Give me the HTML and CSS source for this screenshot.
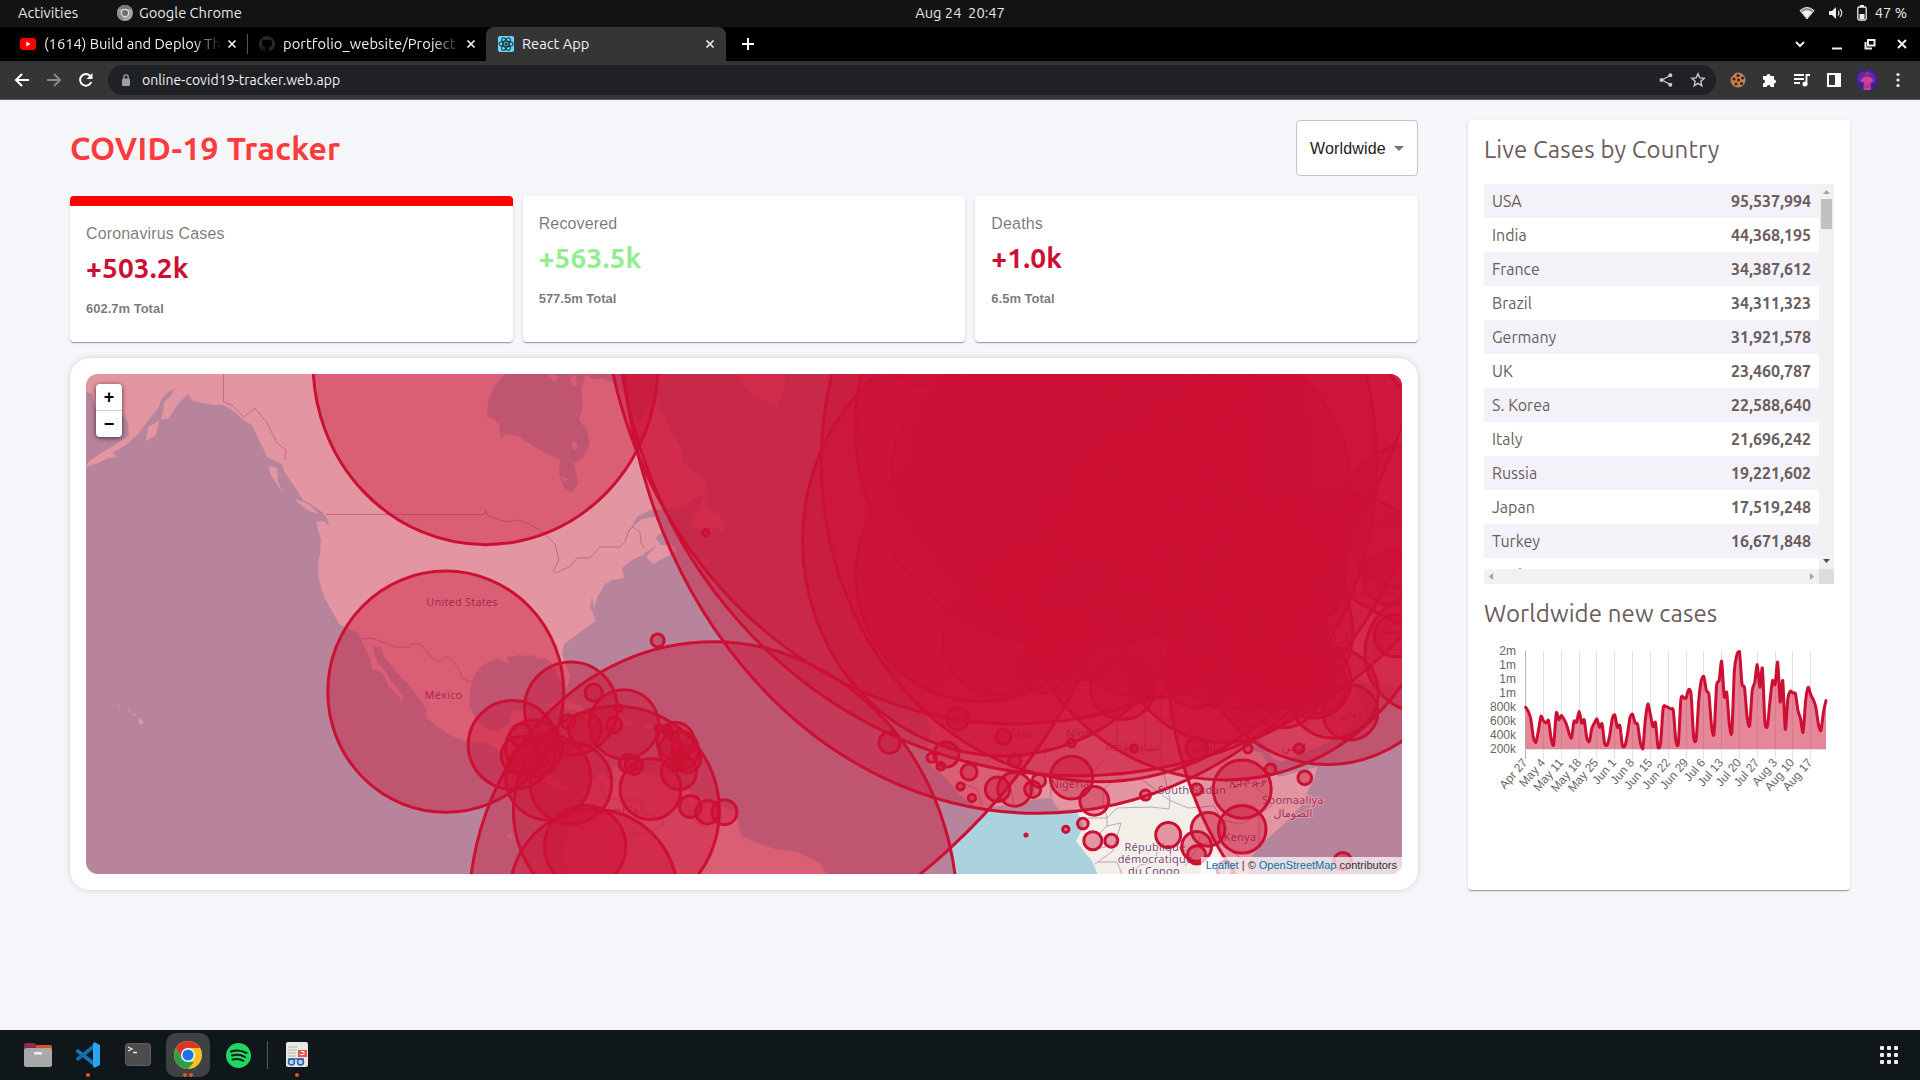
FILE: index.html
```html
<!DOCTYPE html>
<html lang="en">
<head>
<meta charset="utf-8">
<title>React App</title>
<link rel="stylesheet" href="styles.css">
</head>
<body>
<header class="topbar">
  <div class="topbar-left">
    <span class="activities">Activities</span>
    <svg width="16" height="16" viewBox="0 0 16 16"><circle cx="8" cy="8" r="8" fill="#a5a5a5"/><path d="M1 4a8 8 0 0 1 14 0H8z" fill="#777"/><path d="M1 4l4 6 2 6A8 8 0 0 1 1 4z" fill="#8c8c8c"/><circle cx="8" cy="8" r="4.2" fill="#ddd"/><circle cx="8" cy="8" r="3" fill="#6e6e6e"/></svg>
    <span class="appname">Google Chrome</span>
  </div>
  <span class="clock">Aug 24&nbsp; 20:47</span>
  <div class="topbar-right">
    <svg width="16" height="14" viewBox="0 0 16 14"><path d="M8 13L1 4.500Q8-1.500 15 4.500z" fill="#8b8b8b" stroke="#eee"/><path d="M8 12L3 6Q8 2.500 13 6z" fill="#f2f2f2"/></svg>
    <svg width="16" height="14" viewBox="0 0 16 14"><path d="M1 5h3l4-4v12L4 9H1z" fill="#eee"/><path d="M10 4.500q2 2.500 0 5M12 3q3.500 4 0 8" fill="none" stroke="#ddd" stroke-width="1.200"/></svg>
    <svg width="10" height="16" viewBox="0 0 10 16"><path d="M3 0h4v2H3z" fill="#eee"/><rect x=".8" y="2" width="8.400" height="13" rx="1.500" fill="none" stroke="#eee" stroke-width="1.300"/><path d="M2.500 9h5v5h-5z" fill="#eee"/></svg>
    <span class="battery">47 %</span>
  </div>
</header>

<nav class="tabs">
  <div class="tab tab-one">
    <svg width="16" height="16" viewBox="0 0 16 16"><rect y="2" width="16" height="12" rx="3" fill="#f00"/><path d="M6.300 5.500v5L10.500 8z" fill="#fff"/></svg>
    <span class="tab-title fade">(1614) Build and Deploy Th</span>
    <svg class="tab-x" width="10" height="10" viewBox="0 0 10 10"><path d="M1.500 1.500l7 7m0-7l-7 7"/></svg>
  </div>
  <div class="tab tab-two">
    <svg width="16" height="16" viewBox="0 0 16 16"><path d="M8 0a8 8 0 0 0-2.500 15.600c.4.100.5-.2.500-.4v-1.500c-2.200.5-2.700-1-2.700-1-.4-.9-.9-1.200-.9-1.200-.7-.5.1-.5.1-.5.800.1 1.200.8 1.200.8.700 1.300 1.900.9 2.300.7.100-.5.300-.9.500-1.100-1.800-.2-3.600-.9-3.600-4 0-.9.300-1.600.8-2.100-.1-.2-.4-1 .1-2.100 0 0 .7-.2 2.200.8a7.600 7.600 0 0 1 4 0c1.500-1 2.200-.8 2.200-.8.400 1.100.2 1.900.1 2.100.500.5.8 1.200.8 2.100 0 3.100-1.900 3.700-3.600 3.900.3.300.5.800.5 1.500v2.400c0 .2.100.5.5.4A8 8 0 0 0 8 0z" fill="#24292e"/></svg>
    <span class="tab-title fade">portfolio_website/Project</span>
    <svg class="tab-x" width="10" height="10" viewBox="0 0 10 10"><path d="M1.500 1.500l7 7m0-7l-7 7"/></svg>
  </div>
  <div class="tab tab-active">
    <svg width="16" height="16" viewBox="0 0 16 16"><rect width="16" height="16" rx="2" fill="#61dafb"/><g fill="none" stroke="#20353d" stroke-width="1.100"><ellipse cx="8" cy="8" rx="7" ry="2.700"/><ellipse cx="8" cy="8" rx="7" ry="2.700" transform="rotate(60 8 8)"/><ellipse cx="8" cy="8" rx="7" ry="2.700" transform="rotate(120 8 8)"/></g><circle cx="8" cy="8" r="1.500" fill="#20353d"/></svg>
    <span class="tab-title">React App</span>
    <svg class="tab-x" width="10" height="10" viewBox="0 0 10 10"><path d="M1.500 1.500l7 7m0-7l-7 7"/></svg>
  </div>
  <svg class="newtab" width="14" height="14" viewBox="0 0 14 14"><path d="M7 1v12M1 7h12" stroke="#fff" stroke-width="2"/></svg>
  <div class="window-controls">
    <svg width="12" height="12" viewBox="0 0 12 12"><path d="M2 4l4 4 4-4"/></svg>
    <svg width="12" height="12" viewBox="0 0 12 12"><path d="M1 10.500h10"/></svg>
    <svg width="12" height="12" viewBox="0 0 12 12"><path d="M4 2h6.500v5.500H4zM1.500 4v6.500H8"/></svg>
    <svg width="12" height="12" viewBox="0 0 12 12"><path d="M2 2l8 8m0-8l-8 8"/></svg>
  </div>
</nav>

<div class="toolbar">
  <svg width="16" height="16" viewBox="0 0 16 16" class="nav-icon"><path d="M15 8H2.500M8 2L2 8l6 6"/></svg>
  <svg width="16" height="16" viewBox="0 0 16 16" class="nav-icon dim"><path d="M1 8h12.500M8 2l6 6-6 6"/></svg>
  <svg width="16" height="16" viewBox="0 0 16 16" class="nav-icon"><path d="M13.300 10A5.800 5.800 0 1 1 12.500 4.300"/><path d="M14.500 1v6h-6z" fill="#fff" stroke="none"/></svg>
  <div class="omnibox">
    <svg width="10" height="13" viewBox="0 0 10 13"><rect x="1" y="4.500" width="8" height="7.500" rx="1" fill="#9aa0a6"/><path d="M2.800 5V3a2.200 2.200 0 0 1 4.400 0v2" fill="none" stroke="#9aa0a6" stroke-width="1.300"/></svg>
    <span class="url">online-covid19-tracker.web.app</span>
    <svg width="14" height="14" viewBox="0 0 14 14"><path d="M11 2.500L3 7l8 4.500" fill="none" stroke="#c5c7ca" stroke-width="1.300"/><g fill="#c5c7ca"><circle cx="11.300" cy="2.300" r="2"/><circle cx="2.500" cy="7" r="2"/><circle cx="11.300" cy="11.700" r="2"/></g></svg>
    <svg width="16" height="16" viewBox="0 0 16 16"><path d="M8 1.800l1.800 4.100 4.400.4-3.300 3 .9 4.400L8 11.400l-3.800 2.300.9-4.400-3.300-3 4.400-.4z" fill="none" stroke="#c5c7ca" stroke-width="1.400"/></svg>
  </div>
  <div class="extensions">
    <svg width="16" height="16" viewBox="0 0 16 16"><circle cx="8" cy="8" r="7.500" fill="#c77e53"/><path d="M0 0h6L2 5H0z" fill="#353535"/><g fill="#3b2316"><circle cx="8" cy="3.500" r="1.600"/><circle cx="4" cy="7" r="1.600"/><circle cx="8.500" cy="8" r="1.500"/><circle cx="12.500" cy="6" r="1.500"/><circle cx="6" cy="12" r="1.500"/><circle cx="11.500" cy="11.500" r="1.600"/></g></svg>
    <svg width="16" height="16" viewBox="0 0 16 16"><path d="M1 4h3.500a2 2 0 1 1 4 0H12v3.500a2 2 0 1 1 0 4V15H8.700a2 2 0 0 0-4 0H1v-3.500a2 2 0 0 0 0-4z" fill="#fff"/></svg>
    <svg width="16" height="16" viewBox="0 0 16 16"><path d="M0 3h10M0 7h10M0 11h6M12.500 12V3H16" fill="none" stroke="#fff" stroke-width="1.800"/><circle cx="11" cy="12" r="2.500" fill="#fff"/></svg>
    <svg width="16" height="16" viewBox="0 0 16 16"><path d="M1 1h14v14H1zM3 3v10h6V3z" fill="#fff" fill-rule="evenodd"/></svg>
    <svg width="22" height="22" viewBox="0 0 22 22"><circle cx="11" cy="11" r="11" fill="#39258c"/><path d="M3 5l4-3 2 3 4-3 5 4 2 6-3 3V9l-6-2-6 2-1 5-3-4z" fill="#5b2bab"/><path d="M4.500 12l1.500-3 3-1.500h4L16 9l1.500 3-2 2-1-1 .5 7.500a11 11 0 0 1-7.500 0L8 13l-1.500 1z" fill="#cf4096"/><circle cx="11" cy="5" r="2.600" fill="#8a3080"/><path d="M8.500 15h5l.5 4H8z" fill="#a93aa0"/></svg>
    <svg width="6" height="16" viewBox="0 0 6 16"><g fill="#eee"><circle cx="3" cy="2.500" r="1.600"/><circle cx="3" cy="8" r="1.600"/><circle cx="3" cy="13.500" r="1.600"/></g></svg>
  </div>
</div>

<main class="app">
  <section class="app-left">
    <div class="app-header">
      <h1>COVID-19 Tracker</h1>
      <div class="select">Worldwide <svg width="10" height="5" viewBox="0 0 10 5"><path d="M0 0h10L5 5z" fill="#757575"/></svg></div>
    </div>
    <div class="stats">
      <article class="card stat selected"><p>Coronavirus Cases</p><h2>+503.2k</h2><small>602.7m Total</small></article>
      <article class="card stat"><p>Recovered</p><h2 class="green">+563.5k</h2><small>577.5m Total</small></article>
      <article class="card stat"><p>Deaths</p><h2>+1.0k</h2><small>6.5m Total</small></article>
    </div>
    <div class="map-card">
      <div class="map">
        <svg id="map" width="1316" height="500" viewBox="86 374 1316 500">
          <rect x="86" y="374" width="1316" height="500" fill="#aad3df"/>
          <g fill="#f2efe9">
            <path d="M86 374V391L92 394 95 408 102 414 118 411 128 421 129 435 118 443 103 452 88 462 86 467 98 463 108 458 118 457 112 453 126 445 139 433 150 418 158 409 162 398 168 392 175 389 170 397 164 402 163 412 161 420 169 418 177 405 182 400 188 394 193 401 202 403 215 405 223 405 232 410 236 413 245 421 252 425 256 434 262 446 267 457 282 464 284 471 290 480 297 490 303 500 312 505 322 512 327 518 329 526 324 521 316 522 321 540 320 553 318 565 319 580 324 597 333 613 340 625 347 628 358 633 361 639 366 650 371 660 372 669 379 671 385 677 389 687 395 692 402 701 403 696 397 688 391 681 387 673 378 664 374 653 373 646 381 647 385 658 393 668 406 682 417 695 427 710 426 717 438 727 450 735 469 743 484 742 495 748 505 754 519 757 528 763 536 769 543 780 553 787 567 792 576 783 584 795 584 818 570 829 564 846 563 863 571 875H827L820 863 798 852 775 849 752 841 741 835 735 812 724 807 718 803 712 801 695 796 684 786 673 774 656 775 640 771 633 769 620 772 616 766 611 772 616 781 607 779 605 772 599 772 587 789 576 782 567 786 559 783 549 772 552 749 536 743 522 744 525 729 530 710 513 711 508 725 499 731 488 730 477 722 469 705 470 692 472 682 477 670 485 664 497 658 502 661 510 664 506 657 520 655 525 656 533 655 538 659 544 657 553 664 560 682 567 688 570 676 562 654 564 644 580 632 596 621 590 606 592 596 594 608 597 598 605 584 612 580 624 578 622 568 632 560 641 556 651 549 657 545 652 551 646 557 653 564 668 556 677 550 674 546 661 545 655 538 662 532 655 517 642 519 632 527 626 536 637 517 650 510 684 508 693 499 708 493 703 478 695 472 684 464 680 447 672 432 665 418 658 406 652 400 638 426 635 413 627 398 618 386 604 379 592 379 585 374V378L581 390 583 405 579 420 587 430 590 443 583 458 574 463 578 484 572 493 564 488 559 473 560 460 549 455 533 446 519 436 508 434 501 438 499 425 494 419 487 417 488 400 496 384 505 374Z"/>
            <path d="M690 527L697 510 704 494 708 500 707 509 719 514 725 525 722 534 716 527 707 528ZM740 374L745 388 754 396 766 401 777 408 783 392 786 374Z"/>
            <path d="M548 374l10 2-4 6ZM570 378l6-3 1 10-4 2ZM573 441l5 4-2 5-5-3ZM561 476l7 3-4 3ZM269 466l8 2 1 14 5 10-8-10-5-9ZM296 499l14 6 8 9-9-3-12-9ZM148 427l11-6-3 14-10 6Z"/>
            <path d="M140 717l4 5-4 3-2-4ZM127 709l4 1-1 2ZM132 713l5 2-3 1ZM117 705l3 1v2ZM545 706L560 699 579 705 602 720 588 720 577 710ZM604 719L614 712 634 723 622 727 603 726ZM581 725l12 3-8 2ZM642 724h10v4h-9ZM506 836l6-3-1 7Z"/>
            <path d="M991 616L983 632 970 652 951 672 928 713 931 743 926 750 931 766 948 780 960 795 982 810 1002 805 1014 808 1034 799 1051 798 1059 810 1074 809 1081 818 1083 828 1076 841 1092 861 1098 875H1249V861L1261 844 1284 824 1301 806 1315 776 1317 767 1279 777 1271 768 1262 754 1250 748 1242 729 1237 719 1219 672 1210 656 1190 649 1150 637 1133 654 1099 637 1085 605 1042 608 1008 621Z"/>
            <path d="M982 610L988 560 1040 540 1045 500 1100 450 1200 374H1402V687L1375 686 1349 676 1333 671 1320 672 1298 656 1310 674 1325 690 1346 680 1366 704 1355 721 1341 736 1321 746 1281 762 1273 759 1247 713 1225 671 1225 625 1150 600 1110 560 1060 550 1035 600Z"/>
          </g>
          <g class="borders">
            <path d="M223.500 374V402L232 405 244 417 255 408 267 423 277 443 286 450 285 460M326 514.500H484L485.500 510 488 516 507 522 516 520 525 522 540 530 555 544 559 560 553 571 556 573 571 566 577 558 590 558 600 547 620 547 625 542 629 530 633 527 640 532 641 543 645 548M361 639L372 638 395 647 410 647V644H420L434 660 440 662 444 657 450 658 458 668 463 679 473 682"/>
            <path d="M600 782L606 798 619 800 641 800 642 812 660 818 664 824 650 832 625 836M575 825L598 838 604 844 597 856 583 862 572 856M687 798L690 817 705 828 720 813"/>
            <path d="M1088 818H1107V826L1121 823M1107 826L1098 835 1106 847 1093 849M1107 818C1104 806 1097 790 1112 782L1140 778 1169 800 1188 808 1214 806M1107 818L1117 808 1151 807 1169 809 1170 800M1121 823L1113 851 1095 864M1098 862H1117L1122 874M1131 874L1140 865 1154 862 1158 850M1214 806L1222 820 1240 824 1259 815 1276 802 1259 790 1249 780M1259 815V844M1200 837L1195 851 1185 866M1185 851L1215 840 1245 861M1051 798V784L1063 775 1090 776 1104 760M1034 799V780M1014 807L1010 782M982 810L978 790 960 782M1010 782L1020 770 1045 776M992 646V740M1117 650V740L1145 755V690M1161 650V720H1237M1161 720V760L1170 800M1045 735L1117 690M1045 735V760M992 740L955 733M1325 690V705L1305 725M1374 600V670M1374 650H1402"/>
          </g>
          <g class="labels">
            <text x="462" y="606">United States</text><text x="443.500" y="699">México</text><text x="613" y="815">Colombia</text>
            <text x="957" y="724">موريتانيا</text><text x="1022" y="737">Mali</text><text x="1081" y="737">Niger</text><text x="1132" y="751">Tchad تشاد</text><text x="1197" y="751">السودان</text><text x="1294" y="751">اليمن</text><text x="1352" y="718">عمان</text><text x="1070" y="788">Nigeria</text><text x="1192" y="794">South Sudan</text><text x="1248" y="787">ኢትዮጵያ</text><text x="1293" y="804">Soomaaliya</text><text x="1293" y="817">الصومال</text><text x="1240" y="841">Kenya</text><text x="1155" y="851">République</text><text x="1155" y="863">démocratique</text><text x="1154" y="875">du Congo</text><text x="1398" y="523">Қазақстан</text><text x="1373" y="598">Turkmenistan</text><text x="1337" y="643">ایران</text><text x="1397" y="634">افغانستان</text>
          </g>
          <g id="circles"></g>
        </svg>
        <div class="zoom"><span>+</span><span>−</span></div>
        <div class="attribution"><a>Leaflet</a> | © <a>OpenStreetMap</a> contributors</div>
      </div>
    </div>
  </section>

  <aside class="card side">
    <h3>Live Cases by Country</h3>
    <div class="table-box">
      <div class="table">
        <div class="row"><span>USA</span><b>95,537,994</b></div>
        <div class="row"><span>India</span><b>44,368,195</b></div>
        <div class="row"><span>France</span><b>34,387,612</b></div>
        <div class="row"><span>Brazil</span><b>34,311,323</b></div>
        <div class="row"><span>Germany</span><b>31,921,578</b></div>
        <div class="row"><span>UK</span><b>23,460,787</b></div>
        <div class="row"><span>S. Korea</span><b>22,588,640</b></div>
        <div class="row"><span>Italy</span><b>21,696,242</b></div>
        <div class="row"><span>Russia</span><b>19,221,602</b></div>
        <div class="row"><span>Japan</span><b>17,519,248</b></div>
        <div class="row"><span>Turkey</span><b>16,671,848</b></div>
        <div class="row"><span>Spain</span><b></b></div>
      </div>
      <div class="vbar"><svg width="15" height="385" viewBox="0 0 15 385"><path d="M4 10h7L7.500 6z" fill="#a3a3a3"/><rect x="2" y="15" width="11" height="30" fill="#c1c1c1"/><path d="M4 375h7l-3.500 4z" fill="#505050"/></svg></div>
      <div class="hbar"><svg width="335" height="15" viewBox="0 0 335 15"><path d="M9 4v7L5 7.500zM326 4v7l4-3.500z" fill="#a3a3a3"/></svg></div>
      <div class="corner"></div>
    </div>
    <h3 class="chart-title">Worldwide new cases</h3>
    <svg id="chart" width="350" height="175" viewBox="1484 640 350 175">
      <g id="grid"></g><path id="area"/><path id="line"/><g id="ticks"></g>
    </svg>
  </aside>
</main>

<footer class="dock">
  <div class="dock-item"><svg width="28" height="26" viewBox="0 0 28 26"><path d="M0 3q0-2 2-2h8l3 2h13q2 0 2 3v6H0z" fill="#8d2a4c"/><path d="M12 3h14q2 0 2 3v6H12z" fill="#d8502a"/><rect y="6" width="28" height="19" rx="2.500" fill="#a9a9a9"/><rect x="10" y="10" width="8" height="2.500" rx="1" fill="#f3f3f3"/></svg></div>
  <div class="dock-item"><svg width="26" height="26" viewBox="0 0 26 26"><path d="M1 8.500L3 7l17 13v5L1 10z" fill="#1278bd"/><path d="M1 17.500L3 19 20 6V1L1 16z" fill="#0f6cb0"/><path d="M19 0l6 3v20l-6 3-1-2V2z" fill="#2ba6ee"/></svg><div class="dots"><i></i></div></div>
  <div class="dock-item"><svg width="26" height="24" viewBox="0 0 26 24"><rect x=".5" y=".5" width="25" height="22" rx="3" fill="#4c4c4c" stroke="#606060"/><path d="M3 4l4 2-4 2M8 9.500h4" fill="none" stroke="#e8e8e8" stroke-width="1.300"/></svg></div>
  <div class="dock-item current"><svg width="28" height="28" viewBox="0 0 28 28"><circle cx="14" cy="14" r="14" fill="#fcc31e"/><path d="M1.900 7a14 14 0 0 1 24.200 0H14l-6 10.500z" fill="#df3426"/><path d="M1.900 7L8 17.500l6 3.500h6l-6 7A14 14 0 0 1 1.900 7z" fill="#2e9e49"/><circle cx="14" cy="14" r="7" fill="#fff"/><circle cx="14" cy="14" r="5.600" fill="#1a73e8"/></svg><div class="dots"><i></i><i></i></div></div>
  <div class="dock-item"><svg width="25" height="25" viewBox="0 0 25 25"><circle cx="12.500" cy="12.500" r="12.500" fill="#1fd660"/><path d="M5 8.500q8-2.500 15.500 1.500M6 12.500q7-2 13 1.500M6.500 16.500q6-1.500 11 1.300" fill="none" stroke="#10191a" stroke-width="2" stroke-linecap="round"/></svg></div>
  <div class="divider"></div>
  <div class="dock-item last"><svg width="22" height="26" viewBox="0 0 22 26"><rect width="22" height="25" rx="2" fill="#e7e7e3"/><path d="M2 5h9M2 8h9M2 11h8M2 14h8" stroke="#b4b4b0"/><rect x="12" y="8" width="9" height="7" fill="#ef5350"/><path d="M14 12.500h4v-3h-3" fill="none" stroke="#fff"/><g fill="#b7d0e6" stroke="#2962a8" stroke-width="1.500"><circle cx="5.500" cy="20" r="3"/><circle cx="14.500" cy="20" r="3"/></g><path d="M2 17h16" stroke="#2962a8" stroke-width="1.500"/></svg><div class="dots"><i></i></div></div>
  <svg class="grid-icon" width="18" height="18" viewBox="0 0 18 18"><g fill="#eee"><rect width="4" height="4" rx="1"/><rect x="7" width="4" height="4" rx="1"/><rect x="14" width="4" height="4" rx="1"/><rect y="7" width="4" height="4" rx="1"/><rect x="7" y="7" width="4" height="4" rx="1"/><rect x="14" y="7" width="4" height="4" rx="1"/><rect y="14" width="4" height="4" rx="1"/><rect x="7" y="14" width="4" height="4" rx="1"/><rect x="14" y="14" width="4" height="4" rx="1"/></g></svg>
</footer>
<script src="app.js"></script>
</body>
</html>
```
FILE: styles.css
```css
* { box-sizing: border-box; }
body { margin: 0; width: 1920px; height: 1080px; overflow: hidden; display: flex; flex-direction: column; background: #f5f6fa; font-family: Ubuntu, "Noto Sans", sans-serif; }
svg { display: block; flex: none; }
h1, h2, h3, p { margin: 0; }

.topbar { height: 27px; flex: none; background: #131313; color: #e6e6e6; display: grid; grid-template-columns: 1fr auto 1fr; align-items: center; font-size: 14.67px; line-height: 24px; padding-bottom: 1px; }
.topbar-left { display: flex; align-items: center; padding-left: 18px; }
.activities { width: 99px; }
.appname { margin-left: 6px; }
.topbar-right { display: flex; align-items: center; justify-content: flex-end; gap: 13px; padding-right: 13px; }
.battery { margin-left: -5px; }

.tabs { height: 34px; flex: none; background: #000; display: flex; align-items: center; }
.tab { height: 34px; display: flex; align-items: center; color: #f1f1f1; font-size: 14.67px; }
.tab-title { flex: 1; margin: 0 5px 0 8px; padding-bottom: 2px; white-space: nowrap; overflow: hidden; }
.fade { -webkit-mask-image: linear-gradient(90deg, #000 84%, transparent 100%); mask-image: linear-gradient(90deg, #000 84%, transparent 100%); }
.tab-x path { stroke: #eee; stroke-width: 1.7; }
.tab-one { width: 248px; padding: 0 11px 0 20px; background: linear-gradient(#555, #555) right center / 1px 20px no-repeat; }
.tab-two { width: 238px; padding: 0 10px 0 11px; letter-spacing: .1px; }
.tab-active { width: 240px; padding: 0 11px 0 12px; background: #353535; border-radius: 8px 8px 0 0; }
.newtab { margin-left: 15px; }
.window-controls { margin-left: auto; display: flex; gap: 20.500px; padding-right: 12px; }
.window-controls svg:first-child { margin-right: 5px; }
.window-controls path { fill: none; stroke: #eee; stroke-width: 2; }

.toolbar { height: 39px; flex: none; background: #353535; border-bottom: 1px solid #625e5e; display: flex; align-items: center; padding: 0 19px 0 14px; }
.nav-icon { margin-right: 16px; fill: none; stroke: #fff; stroke-width: 2; }
.dim { stroke: #8a8a8a; }
.omnibox { margin-left: -2px; width: 1608px; height: 30px; border-radius: 15px; background: #202124; display: flex; align-items: center; padding: 0 10px 0 13px; gap: 17px; }
.url { flex: 1; margin-left: -6px; color: #f1f1f1; font-size: 14px; letter-spacing: .05px; }
.extensions { margin-left: auto; display: flex; align-items: center; gap: 16px; }
.extensions svg:nth-child(5) { margin: 0 1px 0 -2px; }

.app { flex: 1; display: flex; padding: 20px 70px 0; gap: 50px; }
.app-left { width: 1348px; }
.app-header { height: 56px; display: flex; justify-content: space-between; align-items: center; }
h1 { color: #fc3c3c; font-size: 32px; font-weight: 700; letter-spacing: .28px; }
.select { width: 122px; height: 56px; border: 1px solid #c4c4c4; border-radius: 4px; background: #fff; display: flex; align-items: center; gap: 8px; padding: 1px 0 0 13px; font: 16px "Liberation Sans", sans-serif; letter-spacing: .15px; color: #212121; }
.card { background: #fff; border-radius: 4px; box-shadow: 0 2px 1px -1px rgba(0,0,0,.2), 0 1px 1px rgba(0,0,0,.14), 0 1px 3px rgba(0,0,0,.12); }
.stats { display: grid; grid-template-columns: repeat(3, 1fr); gap: 10px; margin-top: 20px; }
.stat { height: 146px; padding: 16px; color: rgba(0,0,0,.54); font-family: "Liberation Sans", sans-serif; }
.selected { border-top: 10px solid red; }
.stat p { font-size: 16px; line-height: 24px; letter-spacing: .15px; }
.stat h2 { margin: 3px 0 13px; font: 700 28px/38px Ubuntu, "Noto Sans", sans-serif; letter-spacing: .15px; color: #cc1034; }
.stat h2.green { color: lightgreen; }
.stat small { display: block; font-size: 13px; font-weight: 700; line-height: 18px; }

.map-card { margin-top: 16px; height: 532px; padding: 16px; border-radius: 20px; background: #fff; box-shadow: 0 0 8px -4px rgba(0,0,0,.5); }
.map { position: relative; width: 1316px; height: 500px; border-radius: 12px; overflow: hidden; }
.borders { fill: none; stroke: #b795b8; stroke-width: 1; stroke-opacity: .85; }
.labels { font: 11px "Noto Sans", "DejaVu Sans", sans-serif; fill: #7b4c7a; text-anchor: middle; stroke: #f8f3f1; stroke-width: 2px; paint-order: stroke; letter-spacing: .2px; }
#circles ellipse { fill: #cc1034; fill-opacity: .4; stroke: #cc1034; stroke-width: 3; }
.zoom { position: absolute; left: 10px; top: 10px; width: 26px; border-radius: 4px; background: #fff; box-shadow: 0 1px 5px rgba(0,0,0,.65); font: 700 18px/26px "Liberation Sans", sans-serif; text-align: center; }
.zoom span { display: block; height: 26px; }
.zoom span:first-child { height: 27px; border-bottom: 1px solid #ccc; }
.attribution { position: absolute; right: 0; bottom: 0; height: 17px; padding: 0 5px; background: rgba(255,255,255,.7); color: #333; font: 11px/17px "Liberation Sans", sans-serif; }
.attribution a { color: #0078a8; }

.side { width: 382px; height: 770px; padding: 16px; color: #6a5d5d; }
h3 { font-size: 24px; line-height: 28px; font-weight: 400; letter-spacing: .12px; }
.table-box { margin-top: 20px; width: 350px; height: 400px; display: grid; grid-template: 385px 15px / 335px 15px; }
.table { overflow: hidden; font-size: 16px; }
.row { height: 34px; padding: 0 8px; display: flex; align-items: center; justify-content: space-between; }
.row:nth-child(odd) { background: #f3f2f8; }
.vbar, .hbar { background: #f1f1f1; }
.corner { background: #dcdcdc; }
.chart-title { margin: 16px 0 12px; }
#area { fill: #cc1034; fill-opacity: .5; }
#line { fill: none; stroke: #cc1034; stroke-width: 3; stroke-linejoin: round; stroke-linecap: round; }
#grid { stroke: #e2e2e2; stroke-width: 1; }
#ticks { font: 12px "Liberation Sans", sans-serif; fill: #666; text-anchor: end; }

.dock { height: 50px; flex: none; background: #10171a; display: flex; align-items: center; padding: 0 22px 0 16px; }
.dock-item { position: relative; width: 44px; height: 44px; margin-right: 6px; border-radius: 10px; display: grid; place-items: center; }
.current { background: #3e4244; }
.last { margin: 0; }
.divider { width: 1px; height: 28px; margin: 0 7px 0 1px; background: #555b5e; }
.dots { position: absolute; left: 0; right: 0; bottom: 0; display: flex; justify-content: center; gap: 2px; }
.dots i { width: 4px; height: 4px; border-radius: 50%; background: #e95420; }
.grid-icon { margin-left: auto; }
```
FILE: app.js
```js
const NS = 'http://www.w3.org/2000/svg';
function add(parent, name, attrs, text) {
  const el = document.createElementNS(NS, name);
  for (const k in attrs) el.setAttribute(k, attrs[k]);
  if (text) el.textContent = text;
  document.getElementById(parent).appendChild(el);
}

// latitude, longitude, cases in thousands
const countries = `38,-97,95538 20,77,44368 46,2,34388 -10,-55,34311 51,9,31922 54,-2,23461 37,127.5,22589 42.83,12.83,21696
60,100,19222 36,138,17519 39,35,16672 40,-4,13319 16,106,11380 -27,133,9950 -34,-64,9659 52.5,5.75,8385 32,53,7505 23,-102,6988
4,-72,6299 -5,120,6335 52,20,6170 39.5,-8,5399 23.5,121,5150 49,32,5039 47.33,13.33,4840 2.5,112.5,4760 15,100,4640 31.5,34.75,4610
50.83,4,4450 40,127,4773 -30,-71,4350 60,-95,4130 39,22,4700 -29,24,4010 47,8,4010 49.75,15.5,4010 -10,-76,4070 13,122,3860
46,25,3210 56,10,3260 62,15,2560 33,44,2450 44,21,2240 47,20,2040 24,90,2010 48.67,19.5,1840 42,43.5,1740 31,36,1730 53,-8,1650
30,70,1567 62,10,1460 48,68,1380 64,26,1220 32,-5,1264 33.8,35.8,1205 43,25,1225 45.17,15.5,1200 34,9,1143 21.5,-80,1110
56,24,1200 46,15,1110 15.5,-90.25,1090 24,54,1010 -17,-65,1100 29.34,47.66,658 53,28,994 28,84,995 10,-84,1050 -2,-77.5,990
9,-80,970 25,45,813 57,25,880 40.5,47.5,815 26,50.55,670 19,-70.67,637 7,81,670 32,35.25,700 59,26,594 47,29,560 8,-66,542
27,30,515 25,17,507 8,38,493 35,33,570 15,-86.5,450 40,45,430 25.5,51.25,420 44,18,396 21,57,397 41.83,22,340 1,38,338
41,20,327 49.75,6.17,290 42,19.3,270 28,3,270 10,8,263 41,64,243 14.67,-61,217 65,-18,205 41,75,206 16.25,-61.58,190 33,65,190
13.83,-88.92,201 11,-61,177 3.25,73,185 1,32,169 8,-2,168 18.25,-77.5,149 -2,30,132 6,12,122 35.83,14.58,114 13.17,-59.53,101
4,-53,92 0,25,92.8 14,-14,88 8,-5,87 4,-56,81 5,-59,71 17.25,-88.75,68 -1,11.75,48.6 8,1.17,38 11,-10,37 24.25,-76,37 16,8,9
17,-4,31 20,-12,62.8 15,30,63 35,38,57 16,-24,62 12.5,-69.97,43 12.12,-68.9,45 -3.5,30,49 19,-72.42,33 10,49,27 9.5,2.25,27
-1,15,25 13.88,-60.97,29 12.12,-61.67,19 8,30,18 2,10,17 11.5,43,15.7 7,21,14.8 32.33,-64.75,18 13.47,-16.57,12 15,48,12
19.5,-80.5,28 13,-85,18 15,19,7.5 13,-2,21 12,-15,8.6 8.5,-11.5,7.7 6.5,-9.5,7.8 15,39,10 1,7,6 0,0,.7 46.83,-56.33,3
17.05,-61.8,8.9 17.33,-62.75,6.5 18.04,-63.07,10.8 18.08,-63.05,11.6 15.42,-61.33,14.8 18.5,-64.5,7.2 13.25,-61.2,9.4
18.25,-63.17,3.7 16.75,-62.2,1 21.75,-71.58,6.3 12.15,-68.27,11 17.9,-62.83,5 -4.58,55.67,45 -6,35,38 39,71,17.8 62,-7,34
42.5,1.5,46 43.73,7.4,14 47.27,9.53,19 36.18,-5.37,20`.split(/\s+/).map(s => s.split(',').map(Number));

// spherical mercator at zoom 3; the equator and prime meridian meet at (X0, Y0)
const D = Math.PI / 180, K = 1024 / Math.PI, X0 = 1026, Y0 = 835;
const project = lat => {
  const s = Math.sin(Math.max(Math.min(lat, 85.0511), -85.0511) * D);
  return Y0 - K * Math.log((1 + s) / (1 - s)) / 2;
};
for (const [lat, lng, cases] of countries) {
  const r = Math.sqrt(cases * 1000) * 800 / 6371000 / D;
  const top = project(lat + r), bottom = project(lat - r), cy = (top + bottom) / 2;
  const lat2 = (2 * Math.atan(Math.exp((Y0 - cy) / K)) - Math.PI / 2) / D;
  const lngR = Math.acos((Math.cos(r * D) - Math.sin(lat * D) * Math.sin(lat2 * D)) / (Math.cos(lat * D) * Math.cos(lat2 * D))) / D;
  if (isNaN(lngR)) continue;
  add('circles', 'ellipse', { cx: X0 + lng * 2048 / 360, cy, rx: Math.max(lngR * 2048 / 360, 1), ry: Math.max(cy - top, 1) });
}

// daily new cases, as plotted heights
const daily = [440,452,475,530,545,510,467,481,487,480,535,552,457,477,465,475,491,517,532,482,485,452,487,478,532,543,503,487,475,500,490,
548,553,525,475,463,500,495,555,555,520,470,461,487,492,545,568,478,430,462,498,486,560,548,442,438,440,445,450,540,548,415,411,413,387,402,
530,535,420,360,348,390,402,495,520,375,360,302,408,396,490,515,330,282,272,370,382,470,495,390,365,312,380,323,485,495,420,360,372,305,424,
360,506,415,392,397,400,450,475,515,420,380,402,417,440,490,510,455,420];
const step = 300.3 / (daily.length - 1), left = 1525.7, base = 749, ceil = 651.5;
const clamp = y => Math.max(Math.min(y, base), ceil);
const pts = daily.map((v, i) => [left + i * step, clamp(560.6 + v / 3)]);
let d = 'M' + pts[0];
for (let i = 0; i < pts.length - 1; i++) {
  const a = pts[Math.max(i - 1, 0)], b = pts[i], c = pts[i + 1], e = pts[Math.min(i + 2, pts.length - 1)], t = .12;
  d += `C${b[0] + (c[0] - a[0]) * t},${clamp(b[1] + (c[1] - a[1]) * t)} ${c[0] - (e[0] - b[0]) * t},${clamp(c[1] - (e[1] - b[1]) * t)} ${c}`;
}
document.getElementById('line').setAttribute('d', d);
document.getElementById('area').setAttribute('d', `${d}L${pts[pts.length - 1][0]},${base}L${left},${base}Z`);
['2m', '1m', '1m', '1m', '800k', '600k', '400k', '200k'].forEach((t, i) => add('ticks', 'text', { x: 1516, y: 655 + i * 14 }, t));
['Apr 27', 'May 4', 'May 11', 'May 18', 'May 25', 'Jun 1', 'Jun 8', 'Jun 15', 'Jun 22', 'Jun 29', 'Jul 6', 'Jul 13', 'Jul 20', 'Jul 27', 'Aug 3', 'Aug 10', 'Aug 17'].forEach((t, i) => {
  const x = Math.round(left + i * 7 * step - .5) + .5;
  add('grid', 'line', { x1: x, x2: x, y1: 651, y2: 759, stroke: i ? '#e2e2e2' : '#b5b5b5' });
  add('ticks', 'text', { x: 0, y: 0, transform: `translate(${x + 2.5} 763) rotate(-49)` }, t);
});
add('grid', 'line', { x1: 1525, x2: 1826, y1: 749.5, y2: 749.5 });
```
